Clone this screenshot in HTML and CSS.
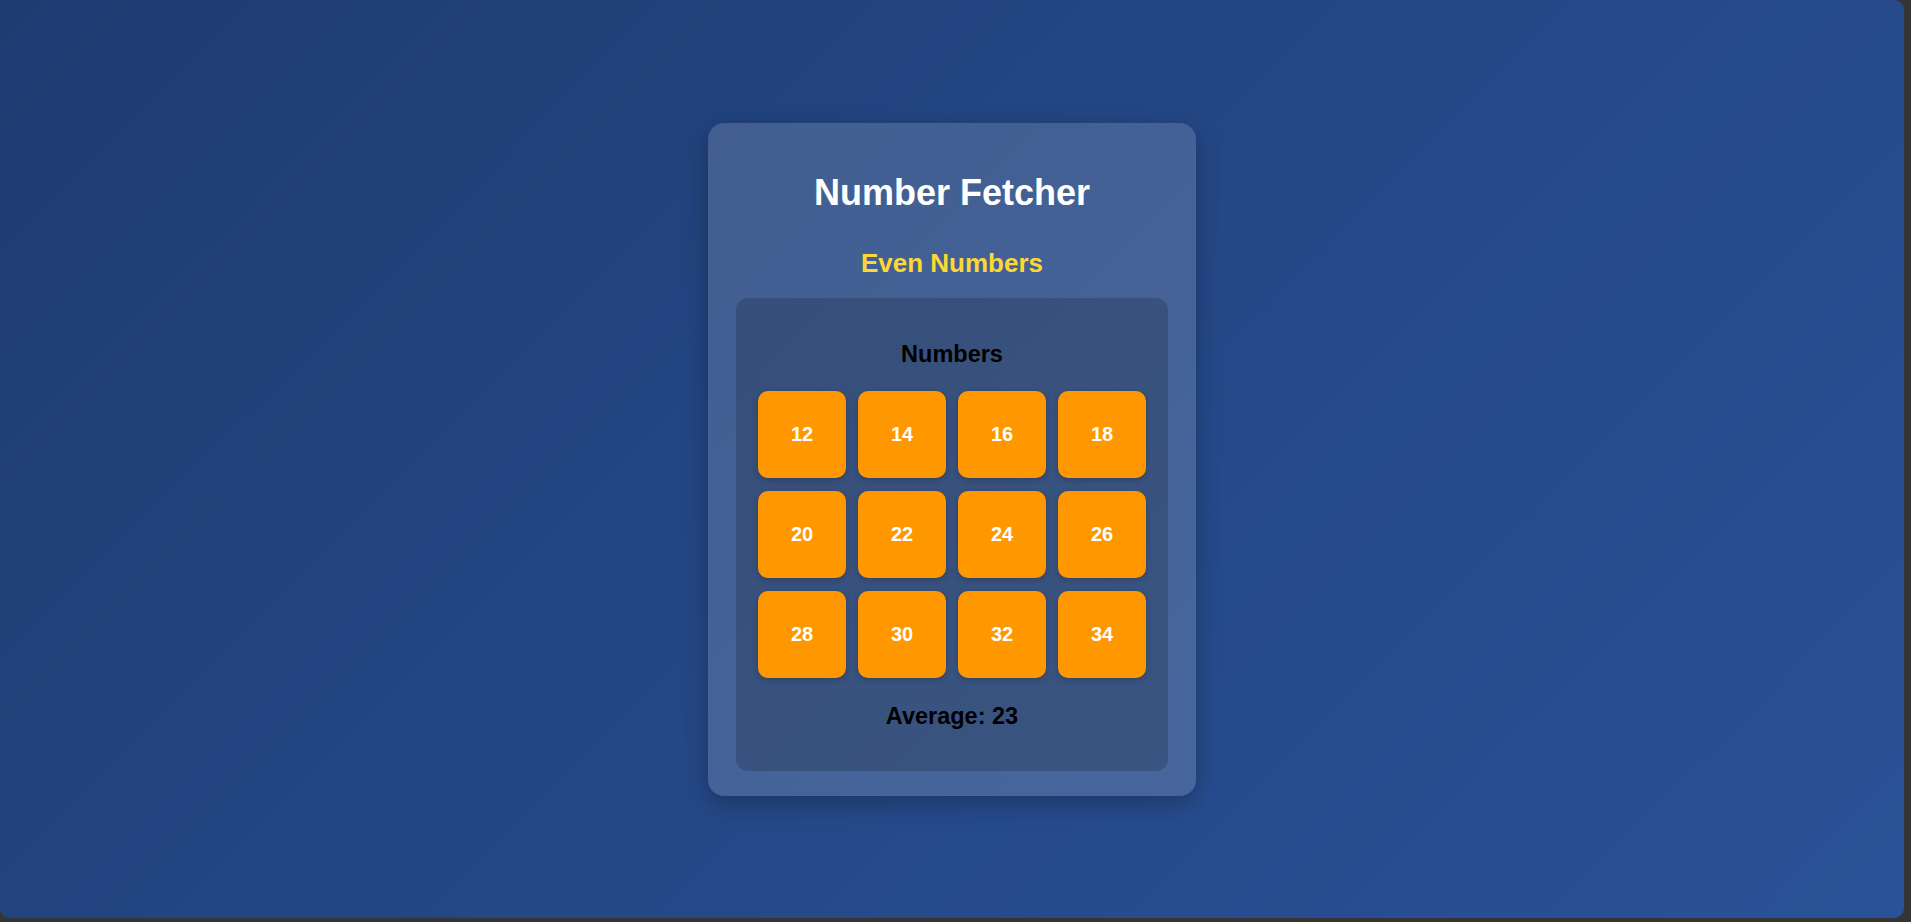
FILE: index.html
```html
<!DOCTYPE html>
<html lang="en">
<head>
<meta charset="utf-8">
<title>Number Fetcher</title>
<link rel="stylesheet" href="styles.css">
</head>
<body>
<main class="page">
  <section class="card">
    <h1 class="title">Number Fetcher</h1>
    <h2 class="subtitle">Even Numbers</h2>
    <div class="panel">
      <h3 class="panel-title">Numbers</h3>
      <div class="grid">
        <div class="tile">12</div>
        <div class="tile">14</div>
        <div class="tile">16</div>
        <div class="tile">18</div>
        <div class="tile">20</div>
        <div class="tile">22</div>
        <div class="tile">24</div>
        <div class="tile">26</div>
        <div class="tile">28</div>
        <div class="tile">30</div>
        <div class="tile">32</div>
        <div class="tile">34</div>
      </div>
      <p class="average">Average: 23</p>
    </div>
  </section>
</main>
</body>
</html>
```
FILE: styles.css
```css
html {
  margin: 0;
  padding: 0;
  background: #353535;
  height: 100%;
}

body {
  margin: 0;
  padding: 0;
  width: 1904px;
  height: 918px;
  overflow: hidden;
  border-radius: 0 10px 10px 10px;
  background: linear-gradient(135deg, #1e3c72 0%, #2a5298 100%);
  font-family: "Liberation Sans", Arial, sans-serif;
}

.page {
  display: flex;
  justify-content: center;
  align-items: flex-start;
  padding-top: 123px;
}

.card {
  width: 488px;
  box-sizing: border-box;
  padding: 50px 28px 25px;
  background: rgba(255, 255, 255, 0.15);
  border-radius: 16px;
  box-shadow: 0 8px 24px rgba(0, 0, 0, 0.25);
  text-align: center;
}

.title {
  margin: 0;
  font-size: 36px;
  line-height: 40px;
  font-weight: 700;
  color: #ffffff;
}

.subtitle {
  margin: 35px 0 20px;
  font-size: 26px;
  line-height: 30px;
  font-weight: 700;
  color: #fdd835;
}

.panel {
  background: rgba(0, 0, 0, 0.17);
  border-radius: 12px;
  padding: 43px 22px 42px;
}

.panel-title {
  margin: 0 0 24px;
  font-size: 23.5px;
  line-height: 26px;
  font-weight: 700;
  color: #000000;
}

.grid {
  display: grid;
  grid-template-columns: repeat(4, 88px);
  grid-auto-rows: 87px;
  column-gap: 12px;
  row-gap: 13px;
  justify-content: center;
}

.tile {
  display: flex;
  align-items: center;
  justify-content: center;
  background: #ff9800;
  border-radius: 10px;
  box-shadow: 0 2px 6px rgba(0, 0, 0, 0.2);
  color: #ffffff;
  font-size: 20px;
  font-weight: 700;
}

.average {
  margin: 25px 0 0;
  font-size: 23.5px;
  line-height: 26px;
  font-weight: 700;
  color: #000000;
}
```
